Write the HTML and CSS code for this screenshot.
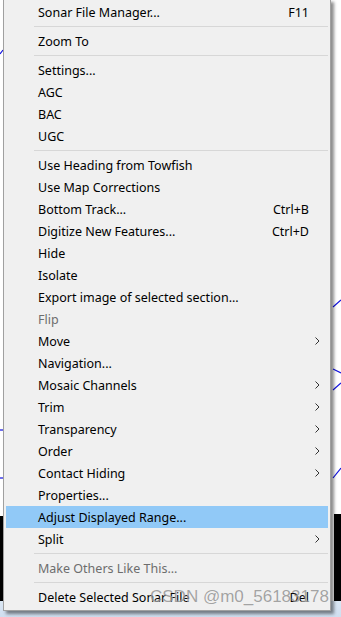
FILE: index.html
```html
<!DOCTYPE html>
<html>
  <head>
    <title>Sonar context menu</title>
    <link rel="stylesheet" href="styles.css">
  </head>
  <body>
    <div class="desktop">
      <svg class="canvas" width="341" height="617" viewBox="0 0 341 617">
        <rect x="0" y="516" width="4" height="90" fill="#000" />
        <rect x="334" y="514" width="7" height="92" fill="#000" />
        <path d="M0 54 L3 50" stroke="#1010e0" stroke-width="1.2" fill="none" />
        <path d="M333 307 L341 300" stroke="#1010e0" stroke-width="1.2" fill="none" />
        <path d="M333 369 L341 373" stroke="#1010e0" stroke-width="1.2" fill="none" />
        <path d="M333 390 L341 383" stroke="#1010e0" stroke-width="1.2" fill="none" />
        <path d="M333 478 L341 468" stroke="#1010e0" stroke-width="1.2" fill="none" />
        <path d="M0 430 L3 430" stroke="#1010e0" stroke-width="1.2" fill="none" />
        <path d="M0 478 L3 478" stroke="#1010e0" stroke-width="1.2" fill="none" />
      </svg>
      <div class="taskbar"></div>

      <div class="menu">
        <div class="item"><span class="label">Sonar File Manager...</span><span class="key">F11</span><span class="sub"></span></div>
        <div class="sep"></div>
        <div class="item"><span class="label">Zoom To</span><span class="sub"></span></div>
        <div class="sep"></div>
        <div class="item"><span class="label">Settings...</span><span class="sub"></span></div>
        <div class="item"><span class="label">AGC</span><span class="sub"></span></div>
        <div class="item"><span class="label">BAC</span><span class="sub"></span></div>
        <div class="item"><span class="label">UGC</span><span class="sub"></span></div>
        <div class="sep"></div>
        <div class="item"><span class="label">Use Heading from Towfish</span><span class="sub"></span></div>
        <div class="item"><span class="label">Use Map Corrections</span><span class="sub"></span></div>
        <div class="item"><span class="label">Bottom Track...</span><span class="key">Ctrl+B</span><span class="sub"></span></div>
        <div class="item"><span class="label">Digitize New Features...</span><span class="key">Ctrl+D</span><span class="sub"></span></div>
        <div class="item"><span class="label">Hide</span><span class="sub"></span></div>
        <div class="item"><span class="label">Isolate</span><span class="sub"></span></div>
        <div class="item"><span class="label">Export image of selected section...</span><span class="sub"></span></div>
        <div class="item disabled"><span class="label">Flip</span><span class="sub"></span></div>
        <div class="item"><span class="label">Move</span><span class="sub"><svg width="5" height="8" viewBox="0 0 5 8"><path d="M0.5 0.5 L4 4 L0.5 7.5" /></svg></span></div>
        <div class="item"><span class="label">Navigation...</span><span class="sub"></span></div>
        <div class="item"><span class="label">Mosaic Channels</span><span class="sub"><svg width="5" height="8" viewBox="0 0 5 8"><path d="M0.5 0.5 L4 4 L0.5 7.5" /></svg></span></div>
        <div class="item"><span class="label">Trim</span><span class="sub"><svg width="5" height="8" viewBox="0 0 5 8"><path d="M0.5 0.5 L4 4 L0.5 7.5" /></svg></span></div>
        <div class="item"><span class="label">Transparency</span><span class="sub"><svg width="5" height="8" viewBox="0 0 5 8"><path d="M0.5 0.5 L4 4 L0.5 7.5" /></svg></span></div>
        <div class="item"><span class="label">Order</span><span class="sub"><svg width="5" height="8" viewBox="0 0 5 8"><path d="M0.5 0.5 L4 4 L0.5 7.5" /></svg></span></div>
        <div class="item"><span class="label">Contact Hiding</span><span class="sub"><svg width="5" height="8" viewBox="0 0 5 8"><path d="M0.5 0.5 L4 4 L0.5 7.5" /></svg></span></div>
        <div class="item"><span class="label">Properties...</span><span class="sub"></span></div>
        <div class="item active"><span class="label">Adjust Displayed Range...</span><span class="sub"></span></div>
        <div class="item"><span class="label">Split</span><span class="sub"><svg width="5" height="8" viewBox="0 0 5 8"><path d="M0.5 0.5 L4 4 L0.5 7.5" /></svg></span></div>
        <div class="sep"></div>
        <div class="item disabled"><span class="label">Make Others Like This...</span><span class="sub"></span></div>
        <div class="sep"></div>
        <div class="item"><span class="label">Delete Selected Sonar File</span><span class="key">Del</span><span class="sub"></span></div>
      </div>

      <div class="watermark">CSDN @m0_56183178</div>
    </div>
  </body>
</html>
```

FILE: styles.css
```css
body {
  margin: 0;
  background: #fff;
}
.desktop {
  position: relative;
  width: 341px;
  height: 617px;
  overflow: hidden;
  background: #fff;
  font-family: "Noto Sans", "Liberation Sans", sans-serif;
  font-size: 12.5px;
  color: #000;
}
.canvas {
  position: absolute;
  left: 0;
  top: 0;
}
.taskbar {
  position: absolute;
  left: 0;
  right: 0;
  top: 601px;
  bottom: 0;
  background: linear-gradient(#dbe7f4, #cfdeef);
}
.menu {
  position: absolute;
  left: 3px;
  top: -1px;
  width: 322px;
  padding: 2px 2px 2px 2px;
  background: #f0f0f0;
  border: 1px solid #a0a0a0;
  border-top: none;
  box-shadow: 3px 3px 3px rgba(0, 0, 0, 0.45);
}
.item {
  display: flex;
  align-items: center;
  height: 22px;
  padding-left: 32px;
  white-space: nowrap;
}
.item.active {
  background: #91c9f7;
}
.item.disabled {
  color: #6d6d6d;
}
.label {
  flex: 1;
}
.key {
  text-align: right;
}
.sub {
  width: 19px;
  display: flex;
  align-items: center;
  padding-left: 6px;
  box-sizing: border-box;
}
.sub path {
  fill: none;
  stroke: #333;
  stroke-width: 1;
}
.sep {
  height: 7px;
  display: flex;
  align-items: center;
  padding-left: 28px;
}
.sep::after {
  content: "";
  flex: 1;
  height: 1px;
  background: #d7d7d7;
}
.watermark {
  position: absolute;
  left: 150px;
  top: 587px;
  font-family: "Liberation Sans", sans-serif;
  font-size: 17px;
  color: rgba(125, 125, 125, 0.7);
  text-shadow: 0 0 1px rgba(255, 255, 255, 0.6);
  white-space: nowrap;
}
```
